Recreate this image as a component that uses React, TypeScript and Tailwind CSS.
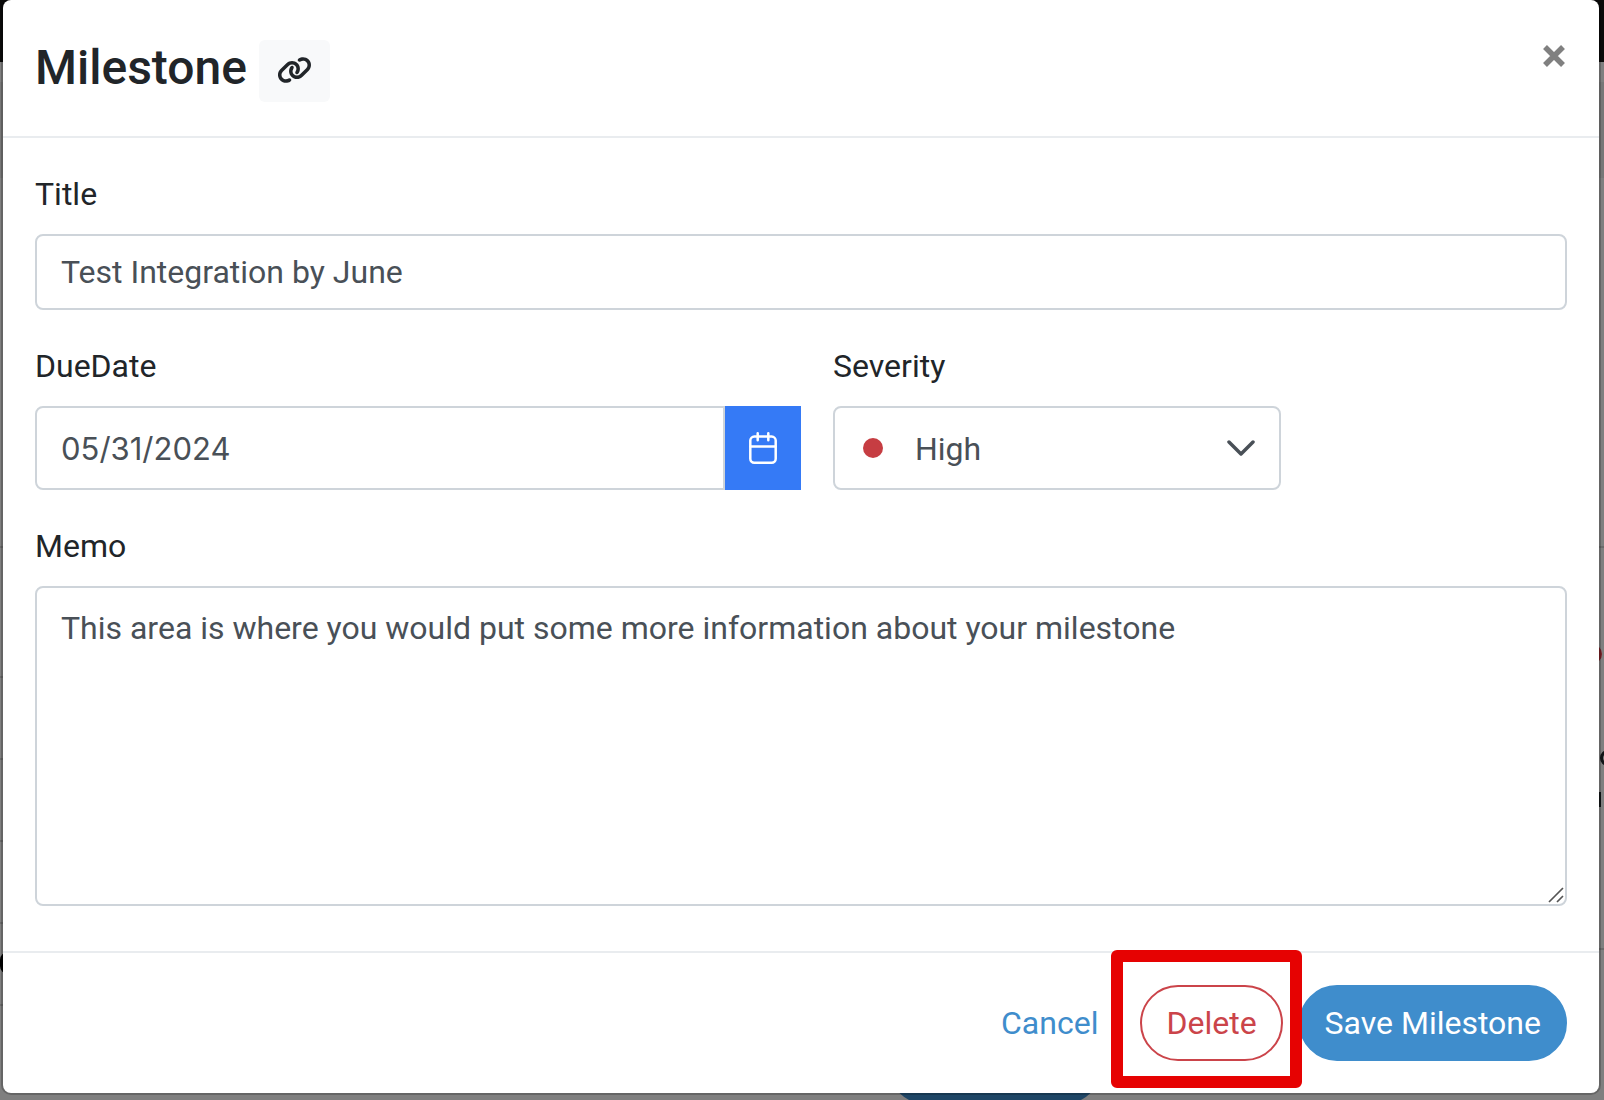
import { useState } from 'react'

const fieldClass =
  'block w-full rounded-lg border-2 border-[#ced4da] bg-white px-6 leading-[48px] text-[#495057] outline-none'

function LinkIcon() {
  return (
    <svg viewBox="0 0 640 512" className="h-7 w-[35px]" fill="currentColor" aria-hidden="true">
      <path d="M579.800 267.700c56.500-56.500 56.500-148 0-204.500c-50-50-128.800-56.500-186.300-15.400l-1.600 1.100c-14.400 10.300-17.700 30.300-7.400 44.600s30.300 17.700 44.600 7.400l1.600-1.100c32.100-22.900 76-19.300 103.800 8.600c31.500 31.500 31.500 82.500 0 114L422.300 334.800c-31.500 31.500-82.500 31.500-114 0c-27.900-27.900-31.500-71.800-8.600-103.800l1.100-1.600c10.300-14.400 6.900-34.400-7.400-44.600s-34.400-6.900-44.600 7.400l-1.100 1.600C206.500 251.200 213 330 263 380c56.500 56.500 148 56.500 204.500 0L579.800 267.700zM60.200 244.300c-56.500 56.500-56.500 148 0 204.500c50 50 128.800 56.500 186.300 15.400l1.600-1.100c14.400-10.300 17.700-30.300 7.400-44.600s-30.300-17.700-44.600-7.400l-1.600 1.100c-32.100 22.900-76 19.300-103.800-8.600C74 372 74 321 105.500 289.500L217.700 177.200c31.500-31.500 82.500-31.500 114 0c27.900 27.900 31.500 71.800 8.600 103.900l-1.100 1.600c-10.300 14.400-6.900 34.400 7.400 44.600s34.400 6.900 44.600-7.400l1.100-1.600C433.500 260.800 427 182 377 132c-56.500-56.500-148-56.500-204.500 0L60.200 244.300z" />
    </svg>
  )
}

function CalendarIcon() {
  return (
    <svg
      viewBox="0 0 28 32"
      className="h-8 w-7"
      fill="none"
      stroke="currentColor"
      strokeWidth="2.5"
      strokeLinecap="round"
      aria-hidden="true"
    >
      <rect x="1.300" y="4.600" width="25.400" height="26.100" rx="4" />
      <path d="M1.500 14.500H26.500M8.700 1.300V8.300M19.300 1.300V8.300" />
    </svg>
  )
}

// Page content that shows past the edges of the dialog
function Backdrop() {
  return (
    <div className="absolute inset-0 flex flex-col overflow-hidden bg-[#7f7f7f]" aria-hidden="true">
      <div className="h-[62px] shrink-0 bg-[#0b0b0a]" />
      <div className="mt-5 h-24 shrink-0 bg-[#777777]" />
      <div className="flex flex-1 pt-[368px]">
        <div className="flex w-5 flex-col">
          <div className="h-[130px] border-t-2 border-[#6b6b6b]" />
          <div className="h-[82px] border-t-2 border-[#6b6b6b]" />
          <div className="h-[82px] border-t-2 border-[#6b6b6b]" />
          <div className="h-[82px] border-t-2 border-[#6b6b6b]" />
          <div className="h-[82px] border-t-2 border-[#6b6b6b] pt-7">
            <div className="h-[22px] w-4 rounded-full border-3 border-black" />
          </div>
          <div className="border-t-2 border-[#6b6b6b]" />
        </div>
        <div className="flex flex-1 items-end justify-center pl-[390px]">
          <div className="-mb-1 h-[76px] w-[214px] rounded-full bg-[#1f4666]" />
        </div>
        <div className="flex w-6 flex-col">
          <div className="flex h-[402px] flex-col border-t-2 border-[#6b6b6b] pt-24">
            <div className="mr-[2px] size-5 self-end rounded-full bg-[#7a1f24]" />
            <div className="mt-[86px] -mr-3 size-4 self-end rounded-full border-3 border-[#111416]" />
            <div className="mt-[26px] mr-[3px] h-[15px] w-1 self-end bg-[#111416]" />
          </div>
          <div className="border-t-2 border-[#6b6b6b]" />
        </div>
      </div>
    </div>
  )
}

export default function App() {
  const [title, setTitle] = useState('Test Integration by June')
  const [dueDate, setDueDate] = useState('05/31/2024')
  const [severity, setSeverity] = useState('High')
  const [memo, setMemo] = useState('This area is where you would put some more information about your milestone')

  return (
    <div className="relative min-h-screen pb-[7px] pl-[3px] pr-[5px] font-['Roboto',sans-serif] text-[32px] leading-[48px] text-[#212529]">
      <Backdrop />
      <div
        role="dialog"
        aria-labelledby="milestone-heading"
        className="relative rounded-lg bg-white shadow-[0_0_0_2px_rgba(0,0,0,0.2)]"
      >
        <header className="flex items-start justify-between border-b-2 border-[#e9ecef] p-8">
          <div className="flex items-center gap-3">
            <h2 id="milestone-heading" className="text-5xl leading-[72px] font-medium">
              Milestone
            </h2>
            <button type="button" aria-label="Copy link" className="mt-[6px] rounded-md bg-[#f8f9fa] px-[18px] pt-4 pb-[18px]">
              <LinkIcon />
            </button>
          </div>
          <button type="button" aria-label="Close" className="pt-[13px] pr-[2px] text-[#808080]">
            <svg viewBox="0 0 22 22" className="size-[22px]" stroke="currentColor" strokeWidth="5.500" aria-hidden="true">
              <path d="M2 2L20 20M20 2L2 20" />
            </svg>
          </button>
        </header>

        <form className="flex flex-col gap-8 px-8 pt-8 pb-[45px]">
          <div className="flex flex-col gap-4">
            <label htmlFor="title">Title</label>
            <input
              id="title"
              type="text"
              value={title}
              onChange={(e) => setTitle(e.target.value)}
              className={`${fieldClass} py-3 text-[32px]`}
            />
          </div>

          <div className="flex gap-8">
            <div className="flex w-1/2 flex-col gap-4">
              <label htmlFor="due-date">DueDate</label>
              <div className="flex">
                <input
                  id="due-date"
                  type="text"
                  value={dueDate}
                  onChange={(e) => setDueDate(e.target.value)}
                  className={`${fieldClass} min-w-0 flex-1 rounded-r-none pt-[17px] pb-[15px] font-['Inter',sans-serif] text-[31px]`}
                />
                <button
                  type="button"
                  aria-label="Choose date"
                  className="flex w-19 items-center justify-center bg-[#357af6] text-white"
                >
                  <CalendarIcon />
                </button>
              </div>
            </div>
            <div className="flex w-[448px] flex-col gap-4">
              <label htmlFor="severity">Severity</label>
              <div className="grid items-center">
                <select
                  id="severity"
                  value={severity}
                  onChange={(e) => setSeverity(e.target.value)}
                  className={`${fieldClass} col-start-1 row-start-1 appearance-none pt-[17px] pb-[15px] pl-20 text-[32px]`}
                >
                  <option>High</option>
                  <option>Medium</option>
                  <option>Low</option>
                </select>
                <div className="pointer-events-none col-start-1 row-start-1 flex items-center justify-between pr-[26px] pl-[30px] text-[#495057]">
                  <span className="size-5 rounded-full bg-[#c63d42]" />
                  <svg
                    viewBox="0 0 28 16"
                    className="h-4 w-7"
                    fill="none"
                    stroke="currentColor"
                    strokeWidth="3.5"
                    strokeLinecap="round"
                    strokeLinejoin="round"
                    aria-hidden="true"
                  >
                    <path d="M2 2L14 14L26 2" />
                  </svg>
                </div>
              </div>
            </div>
          </div>

          <div className="flex flex-col gap-4">
            <label htmlFor="memo">Memo</label>
            <div className="grid">
              <textarea
                id="memo"
                rows={6}
                value={memo}
                onChange={(e) => setMemo(e.target.value)}
                className={`${fieldClass} col-start-1 row-start-1 h-80 resize-none py-4 text-[32px]`}
              />
              <div className="pointer-events-none col-start-1 row-start-1 flex items-end justify-end p-[3px]">
                <svg viewBox="0 0 16 16" className="size-4" stroke="#555555" strokeWidth="1.700" aria-hidden="true">
                  <path d="M1 15L15 1M9 15L15 9" />
                </svg>
              </div>
            </div>
          </div>
        </form>

        <footer className="flex justify-end gap-4 border-t-2 border-[#e9ecef] p-8">
          <button type="button" className="rounded-full border-2 border-transparent px-6 py-3 text-[#3f8dcc]">
            Cancel
          </button>
          <div className="relative">
            <button type="button" className="rounded-full border-2 border-[#cb444a] px-6 py-3 text-[#cb444a]">
              Delete
            </button>
            <div className="pointer-events-none absolute -top-[35px] -right-[19px] -bottom-[27px] -left-[29px] z-10 rounded-md border-12 border-[#e60202]" />
          </div>
          <button type="button" className="rounded-full border-2 border-[#3f8dcc] bg-[#3f8dcc] px-6 py-3 text-white">
            Save Milestone
          </button>
        </footer>
      </div>
    </div>
  )
}
